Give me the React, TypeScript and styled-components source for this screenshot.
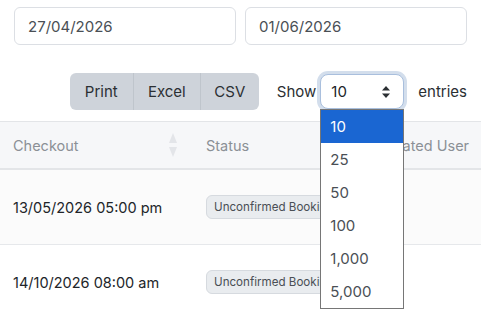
import React from "react";
import styled, { createGlobalStyle } from "styled-components";

const GlobalStyle = createGlobalStyle`
  html, body {
    margin: 0;
    padding: 0;
    background: #ffffff;
    font-family: Inter, "Noto Sans", "Liberation Sans", sans-serif;
    color: #212529;
    overflow: hidden;
  }
`;

const Page = styled.div`
  width: 481px;
  height: 318px;
  overflow: hidden;
  position: relative;
`;

const DateRow = styled.div`
  display: flex;
  gap: 9px;
  padding: 7px 14px 0 14px;
`;

const DateInput = styled.div`
  flex: 1;
  height: 38px;
  box-sizing: border-box;
  border: 1px solid #dcdfe4;
  border-radius: 6px;
  display: flex;
  align-items: center;
  padding-left: 13px;
  font-size: 15px;
  color: #4a4f55;
`;

const Controls = styled.div`
  display: flex;
  justify-content: flex-end;
  align-items: center;
  padding: 0 14px 0 0;
  margin-top: 28px;
  height: 37px;
`;

const ButtonGroup = styled.div`
  display: flex;
  border-radius: 6px;
  overflow: hidden;
  background: #ced3da;
  margin-right: 18px;
`;

const GroupButton = styled.div<{ $w: number; $first?: boolean }>`
  width: ${(p) => p.$w}px;
  height: 37px;
  display: flex;
  align-items: center;
  justify-content: center;
  font-size: 15px;
  color: #2b2f33;
  border-left: ${(p) => (p.$first ? "none" : "1px solid #bfc5cc")};
  box-sizing: border-box;
`;

const Label = styled.span`
  font-size: 15px;
  color: #2b2f33;
`;

const SelectWrap = styled.div`
  position: relative;
  margin: 0 14px 0 4px;
`;

const SelectBox = styled.div`
  width: 84px;
  height: 35px;
  box-sizing: border-box;
  border: 1px solid #a9bfdd;
  border-radius: 8px;
  box-shadow: 0 0 0 3px #d3deec;
  background: #fff;
  display: flex;
  align-items: center;
  justify-content: space-between;
  padding: 0 12px 0 10px;
  font-size: 15px;
  color: #212529;
`;

const DropList = styled.div`
  position: absolute;
  left: 0;
  top: 35px;
  width: 84px;
  box-sizing: border-box;
  border: 1px solid #767676;
  background: #fff;
  z-index: 10;
`;

const DropItem = styled.div<{ $active?: boolean }>`
  height: 33px;
  display: flex;
  align-items: center;
  padding-left: 9px;
  font-size: 15px;
  background: ${(p) => (p.$active ? "#1a66d2" : "#fff")};
  color: ${(p) => (p.$active ? "#fff" : "#4a4f55")};
`;

const TableWrap = styled.div`
  margin-top: 11px;
  width: 481px;
  overflow: hidden;
`;

const Table = styled.div`
  width: 560px;
  border-top: 1px solid #e3e5e8;
`;

const HeadRow = styled.div`
  display: grid;
  grid-template-columns: 193px 168px 1fr;
  height: 46px;
  align-items: center;
  background: #f6f7f9;
  border-bottom: 2px solid #e3e5e8;
`;

const HeadCell = styled.div`
  padding-left: 13px;
  font-size: 14.5px;
  color: #8b9096;
  display: flex;
  align-items: center;
  justify-content: space-between;
  padding-right: 15px;
`;

const BodyRow = styled.div<{ $alt?: boolean }>`
  display: grid;
  grid-template-columns: 193px 168px 1fr;
  height: 74px;
  align-items: center;
  background: ${(p) => (p.$alt ? "#fbfbfb" : "#fff")};
  border-bottom: 1px solid #e6e8eb;
`;

const Cell = styled.div`
  padding-left: 13px;
  font-size: 14.5px;
  color: #212529;
  white-space: nowrap;
`;

const Badge = styled.span`
  display: inline-block;
  padding: 4px 7px;
  font-size: 11.6px;
  color: #4a4f55;
  background: #e9ecef;
  border: 1px solid #d6dadf;
  border-radius: 6px;
  white-space: nowrap;
`;

const SortIcon = () => (
  <svg width="10" height="24" viewBox="0 0 10 24">
    <path d="M5 0 L9 10 L1 10 Z" fill="#e3e5e9" />
    <path d="M1 14 L9 14 L5 24 Z" fill="#e3e5e9" />
  </svg>
);

const UpDown = () => (
  <svg width="10" height="14" viewBox="0 0 10 14">
    <path d="M5 1 L9 5.5 L1 5.5 Z" fill="#2b2f33" />
    <path d="M1 8.5 L9 8.5 L5 13 Z" fill="#2b2f33" />
  </svg>
);

const sizes = ["10", "25", "50", "100", "1,000", "5,000"];

const rows = [
  { checkout: "13/05/2026 05:00 pm", alt: true },
  { checkout: "14/10/2026 08:00 am", alt: false },
];

export default function App() {
  return (
    <Page>
      <GlobalStyle />
      <DateRow>
        <DateInput>27/04/2026</DateInput>
        <DateInput>01/06/2026</DateInput>
      </DateRow>
      <Controls>
        <ButtonGroup>
          <GroupButton $w={63} $first>
            Print
          </GroupButton>
          <GroupButton $w={67}>Excel</GroupButton>
          <GroupButton $w={59}>CSV</GroupButton>
        </ButtonGroup>
        <Label>Show</Label>
        <SelectWrap>
          <SelectBox>
            <span>10</span>
            <UpDown />
          </SelectBox>
          <DropList>
            {sizes.map((s, i) => (
              <DropItem key={s} $active={i === 0}>
                {s}
              </DropItem>
            ))}
          </DropList>
        </SelectWrap>
        <Label>entries</Label>
      </Controls>
      <TableWrap>
        <Table>
          <HeadRow>
            <HeadCell>
              Checkout
              <SortIcon />
            </HeadCell>
            <HeadCell>Status</HeadCell>
            <HeadCell>Updated User</HeadCell>
          </HeadRow>
          {rows.map((r) => (
            <BodyRow key={r.checkout} $alt={r.alt}>
              <Cell>{r.checkout}</Cell>
              <Cell>
                <Badge>Unconfirmed Booking</Badge>
              </Cell>
              <Cell />
            </BodyRow>
          ))}
        </Table>
      </TableWrap>
    </Page>
  );
}
